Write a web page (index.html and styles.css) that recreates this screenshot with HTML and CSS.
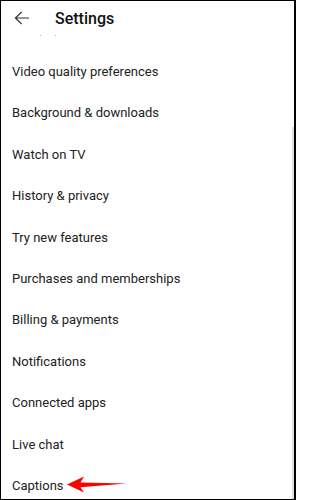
FILE: index.html
```html
<!DOCTYPE html>
<html>
<head>
<meta charset="utf-8">
<link rel="stylesheet" href="styles.css">
</head>
<body>
<div class="screen">
  <header class="topbar">
    <svg class="back" width="16" height="14" viewBox="0 0 16 14">
      <path d="M15 7H1.6M7.6 1L1.4 7l6.2 6" fill="none" stroke="#333" stroke-width="1.2"/>
    </svg>
    <h1 class="title">Settings</h1>
  </header>
  <div class="content">
    <div class="list">
      <div class="peek"><span class="dot d1"></span><span class="dot d2"></span></div>
      <div class="item">Video quality preferences</div>
      <div class="item">Background &amp; downloads</div>
      <div class="item">Watch on TV</div>
      <div class="item">History &amp; privacy</div>
      <div class="item">Try new features</div>
      <div class="item">Purchases and memberships</div>
      <div class="item">Billing &amp; payments</div>
      <div class="item">Notifications</div>
      <div class="item">Connected apps</div>
      <div class="item">Live chat</div>
      <div class="item captions"><span>Captions</span>
        <svg class="pointer" width="62" height="18" viewBox="0 0 62 18">
          <path d="M0 8.5 L17 0.5 L13.5 6.6 L59.5 7.6 L13.5 11.2 L17 16.5 Z" fill="#f00"/>
        </svg>
      </div>
    </div>
    <div class="scrollbar"></div>
  </div>
</div>
</body>
</html>
```

FILE: styles.css
```css
* { box-sizing: border-box; }
html, body { margin: 0; padding: 0; background: #fff; }
.screen {
  width: 296px;
  height: 500px;
  border-top: 1px solid #000;
  border-left: 1px solid #000;
  border-right: 2px solid #000;
  border-bottom: 1px solid #000;
  display: flex;
  flex-direction: column;
  overflow: hidden;
  font-family: Roboto, "Liberation Sans", sans-serif;
  color: #222;
}
.topbar {
  height: 33px;
  flex: none;
  display: flex;
  align-items: center;
  padding-left: 13px;
  padding-top: 2px;
}
.back { display: block; margin-top: -1px; }
.title {
  margin: 0 0 0 25px;
  font-size: 16px;
  font-weight: 500;
  line-height: 20px;
  color: #111;
}
.content {
  flex: 1;
  display: flex;
  min-height: 0;
}
.list {
  flex: 1;
  display: flex;
  flex-direction: column;
}
.peek {
  height: 17.3px;
  flex: none;
  display: flex;
  align-items: flex-start;
  padding-top: 1px;
}
.dot {
  width: 1px;
  height: 1px;
  background: #b5b5b5;
}
.d1 { margin-left: 39px; }
.d2 { margin-left: 14px; }
.item {
  height: 41.4px;
  flex: none;
  display: flex;
  align-items: center;
  padding-left: 11px;
  font-size: 13px;
  line-height: 16px;
}
.captions { gap: 3px; }
.pointer { display: block; margin-top: -1px; }
.scrollbar {
  width: 2px;
  flex: none;
  margin-top: 93px;
  background: #dedede;
}
```
